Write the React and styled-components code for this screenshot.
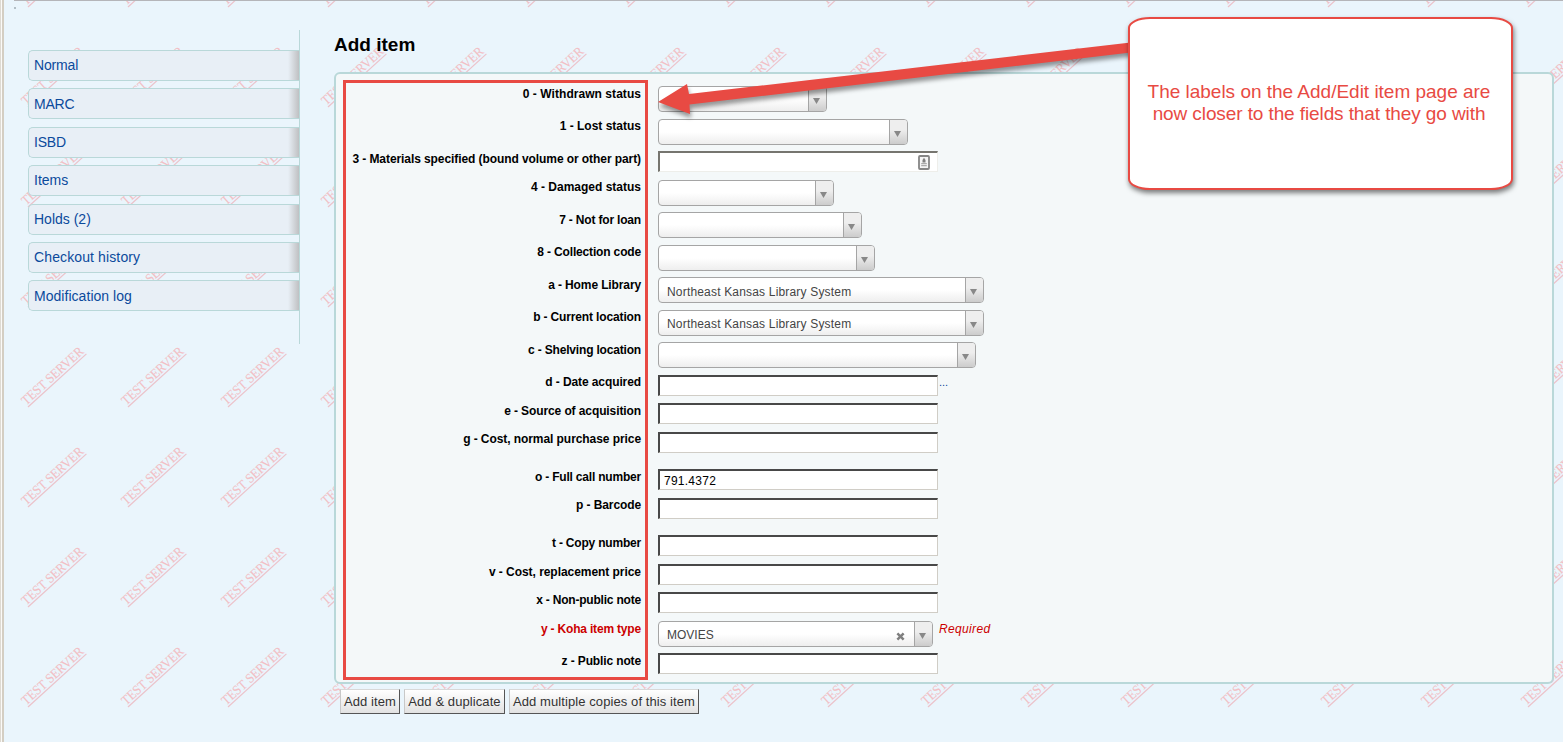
import React from "react";
import styled, { createGlobalStyle } from "styled-components";

const RED = "#e84a43";
const TEAL = "#b9d8d9";

const GlobalStyle = createGlobalStyle`
  * { box-sizing: border-box; }
  body {
    margin: 0;
    overflow: hidden;
    font-family: "Liberation Sans", Arial, sans-serif;
    color: #000;
    background: #eaf5fc;
  }
`;

const Page = styled.div`
  position: relative;
  width: 1563px;
  height: 742px;
  overflow: hidden;
  display: flex;
  background: #eaf5fc;
`;

const WindowEdge = styled.div`
  flex: none;
  width: 4px;
  background: linear-gradient(to right, #dedad2 0 1px, #fbfaf8 1px 2px, #d4cec3 2px 4px);
`;

const Watermarks = styled.svg`
  position: absolute;
  inset: 0;
  pointer-events: none;
`;

const Body = styled.div`
  position: relative;
  flex: 1;
  display: flex;
  margin-left: 10px;
  border-top: 1px solid #b5b5b9;
`;

const Speck = styled.i`
  position: absolute;
  left: 0;
  top: 6px;
  width: 2px;
  height: 2px;
  background: #b3bfc6;
`;

const Sidebar = styled.nav`
  width: 286px;
  height: 314px;
  margin-top: 29px;
  padding: 20px 0 0 14px;
  border-right: 1px solid ${TEAL};
`;

const Tab = styled.a`
  display: block;
  height: 31px;
  margin-bottom: 7.4px;
  padding: 0.15px 0 0 5px;
  border: 1px solid ${TEAL};
  border-right: 0;
  border-radius: 5px 0 0 5px;
  background: linear-gradient(to right, transparent calc(100% - 11px), #bfc0c2 100%), #e8eff6;
  color: #0b4a9c;
  font-size: 14px;
  line-height: 29px;
  letter-spacing: ${(p) => p.$ls || 0}px;

  &:last-child {
    padding-top: 0.5px;
  }
`;

const Main = styled.main`
  flex: 1;
  margin: 0 9px 0 34px;
`;

const Title = styled.h1`
  margin: 0;
  padding-top: 32px;
  height: 71px;
  font-size: 19px;
  line-height: 24px;
`;

const Panel = styled.section`
  height: 612px;
  padding: 12.3px 0 0 10px;
  border: 2px solid ${TEAL};
  border-radius: 6px;
  background: #f4f8f9;
`;

const Highlight = styled.div`
  position: absolute;
  left: 329px;
  top: 79px;
  width: 305px;
  height: 600px;
  border: 3px solid ${RED};
`;

const Row = styled.div`
  display: flex;
  align-items: flex-start;
  height: ${(p) => p.$h}px;
`;

const Label = styled.label`
  width: 295px;
  padding-top: ${(p) => (p.$low ? 0.9 : 0.3)}px;
  margin-right: 17px;
  text-align: right;
  font-size: 12px;
  font-weight: bold;
  line-height: 15px;
  letter-spacing: ${(p) => p.$ls || 0}px;
  white-space: nowrap;
  color: ${(p) => (p.$required ? "#c00" : "#000")};
`;

const Select = styled.div`
  display: flex;
  align-items: center;
  width: ${(p) => p.$w}px;
  height: 26px;
  border: 1px solid #a5a5a5;
  border-radius: 4px;
  overflow: hidden;
  background: linear-gradient(#fff 50%, #eee);
  color: #444;
  font-size: 12px;
`;

const Value = styled.span`
  flex: 1;
  padding: ${(p) => (p.$low ? 3.2 : 2)}px 0 0 8px;
  letter-spacing: ${(p) => p.$ls || 0}px;
`;

const Clear = styled.svg`
  width: 9px;
  height: 9px;
  margin: 5px 9px 0 0;
`;

const Arrow = styled.div`
  display: flex;
  align-items: center;
  justify-content: center;
  width: 18px;
  height: 24px;
  padding: 4px 1.5px 0 0;
  border-left: 1px solid #a5a5a5;
  background: linear-gradient(#eee 40%, #ccc);
`;

const TextField = styled.div`
  display: flex;
  align-items: center;
  width: 280px;
  height: 21px;
  padding: 2px 0 0 4px;
  border-style: solid;
  border-width: 2px 1px 1px 2px;
  border-color: ${(p) => (p.$soft ? "#76756f #eeeeea #eeeeea #76756f" : "#484848 #d0cdc6 #d0cdc6 #484848")};
  background: #fff;
  font-size: 12px;
  line-height: 16px;
  letter-spacing: 0.25px;
`;

const FieldIcon = styled.svg`
  margin: -1px 7px 0 auto;
`;

const Dots = styled.a`
  margin-left: 1px;
  font-size: 11px;
  line-height: 15px;
  color: #0b4a9c;
`;

const Required = styled.em`
  margin-left: 6px;
  padding-top: 0.9px;
  font-size: 12px;
  line-height: 15px;
  letter-spacing: 0.35px;
  color: #c00;
`;

const Actions = styled.div`
  display: flex;
  gap: 4px;
  padding: 5px 0 0 6px;
`;

const Button = styled.button`
  width: ${(p) => p.$w}px;
  height: 25px;
  padding: 0;
  border: 1px solid;
  border-color: #d8d8d8 #555 #555 #c8c8c8;
  border-radius: 0;
  background: linear-gradient(#fff, #e2e2e2);
  color: #333;
  font: 13px "Liberation Sans", Arial, sans-serif;
  letter-spacing: 0.09px;
  white-space: nowrap;
`;

const ArrowOverlay = styled.svg`
  position: absolute;
  left: 650px;
  top: 30px;
  filter: drop-shadow(1px 4px 2px rgba(0, 0, 0, 0.4));
`;

const Callout = styled.aside`
  position: absolute;
  left: 1128px;
  top: 17px;
  width: 385px;
  height: 173px;
  padding-bottom: 1px;
  display: flex;
  flex-direction: column;
  align-items: center;
  justify-content: center;
  border: 2px solid ${RED};
  border-radius: 22px / 11px;
  background: #fff;
  box-shadow: 1px 3px 5px rgba(0, 0, 0, 0.5);
  color: ${RED};
  font-size: 19px;
  line-height: 22px;
  white-space: nowrap;
`;

const CalloutLine = styled.span`
  margin-right: 3px;
  letter-spacing: ${(p) => p.$ls}px;
`;

const tabs = [
  { name: "Normal", ls: -0.15 },
  { name: "MARC", ls: -0.2 },
  { name: "ISBD", ls: -0.2 },
  { name: "Items" },
  { name: "Holds (2)" },
  { name: "Checkout history", ls: 0.12 },
  { name: "Modification log", ls: 0.04 },
];

const fields = [
  { label: "0 - Withdrawn status", labelLs: 0.05, select: 169 },
  { label: "1 - Lost status", select: 250 },
  { label: "3 - Materials specified (bound volume or other part)", labelLs: -0.08, icon: true },
  { label: "4 - Damaged status", select: 176 },
  { label: "7 - Not for loan", labelLs: -0.18, select: 204 },
  { label: "8 - Collection code", labelLs: -0.16, select: 217 },
  {
    label: "a - Home Library",
    labelLs: -0.12,
    select: 326,
    value: "Northeast Kansas Library System",
    ls: 0.18,
    lowValue: true,
  },
  { label: "b - Current location", labelLs: -0.14, select: 326, value: "Northeast Kansas Library System", ls: 0.18 },
  { label: "c - Shelving location", labelLs: -0.18, select: 318 },
  { label: "d - Date acquired", labelLs: -0.1, dots: true },
  { label: "e - Source of acquisition", labelLs: -0.1 },
  { label: "g - Cost, normal purchase price", labelLs: -0.07, h: 37.5 },
  { label: "o - Full call number", labelLs: -0.2, value: "791.4372" },
  { label: "p - Barcode", labelLs: -0.1, h: 37.5 },
  { label: "t - Copy number", labelLs: -0.2 },
  { label: "v - Cost, replacement price", labelLs: -0.05, low: true },
  { label: "x - Non-public note", labelLs: -0.2 },
  { label: "y - Koha item type", labelLs: -0.18, select: 275, value: "MOVIES", required: true, low: true },
  { label: "z - Public note", labelLs: -0.13 },
];

const marks = [];
for (let row = 0; row < 8; row++) {
  for (let col = 0; col < 16; col++) {
    const behindPanel = col > 3 && col < 15 && row > 1 && row < 7;
    if (!behindPanel) marks.push([col * 100, row * 100]);
  }
}

function Field({ f }) {
  return (
    <Row $h={f.h || (f.select ? 32.5 : 28.5)}>
      <Label $required={f.required} $ls={f.labelLs} $low={f.low}>
        {f.label}
      </Label>
      {f.select ? (
        <Select $w={f.select}>
          <Value $ls={f.ls} $low={f.lowValue}>
            {f.value}
          </Value>
          {f.required && (
            <Clear viewBox="0 0 8 8">
              <path d="M1.2 1.2 6.8 6.8M6.8 1.2 1.2 6.8" stroke="#808080" strokeWidth="2.2" />
            </Clear>
          )}
          <Arrow>
            <svg width="7" height="6" viewBox="0 0 7 6">
              <path d="M0 0H7L3.5 6Z" fill="#888" />
            </svg>
          </Arrow>
        </Select>
      ) : (
        <TextField $soft={f.icon}>
          {f.value}
          {f.icon && (
            <FieldIcon width="12" height="15" viewBox="0 0 12 15">
              <rect x="1" y="1" width="10" height="13" rx="1" fill="#f4f4f4" stroke="#858585" strokeWidth="1.8" />
              <path d="M6 2.8 7.5 5V7.4H4.5V5Z" fill="#808080" />
              <path d="M3.2 8.6H8.8M3.2 10.6H8.8" stroke="#aaa" strokeWidth="1.3" />
            </FieldIcon>
          )}
        </TextField>
      )}
      {f.dots && <Dots>...</Dots>}
      {f.required && <Required>Required</Required>}
    </Row>
  );
}

export default function App() {
  return (
    <Page>
      <GlobalStyle />
      <Watermarks width="1563" height="742">
        {marks.map(([x, y]) => (
          <g key={`${x}-${y}`} transform={`translate(${x + 28} ${y + 7}) rotate(-42.3)`}>
            <text
              x="-0.5"
              y="-2.2"
              textLength="79"
              lengthAdjust="spacingAndGlyphs"
              fontFamily="Liberation Serif, serif"
              fontSize="13.5"
              fill="#f2c0c5"
              stroke="#f2c0c5"
              strokeWidth="0.1"
            >
              TEST SERVER
            </text>
            <path d="M0 0H79" stroke="#ecc2ca" strokeWidth="1.2" />
          </g>
        ))}
      </Watermarks>
      <WindowEdge />
      <Body>
        <Speck />
        <Sidebar>
          {tabs.map((t) => (
            <Tab key={t.name} $ls={t.ls}>
              {t.name}
            </Tab>
          ))}
        </Sidebar>
        <Main>
          <Title>Add item</Title>
          <Panel>
            {fields.map((f) => (
              <Field key={f.label} f={f} />
            ))}
          </Panel>
          <Actions>
            <Button $w={60}>Add item</Button>
            <Button $w={101}>Add &amp; duplicate</Button>
            <Button $w={190}>Add multiple copies of this item</Button>
          </Actions>
        </Main>
        <Highlight />
      </Body>
      <ArrowOverlay width="490" height="110" viewBox="650 30 490 110">
        <path d="M658 102 687 84 689 94 1135 42V52L689.500 104.500 690 114Z" fill={RED} />
      </ArrowOverlay>
      <Callout>
        <CalloutLine $ls={-0.01}>The labels on the Add/Edit item page are</CalloutLine>
        <CalloutLine $ls={-0.1}>now closer to the fields that they go with</CalloutLine>
      </Callout>
    </Page>
  );
}
